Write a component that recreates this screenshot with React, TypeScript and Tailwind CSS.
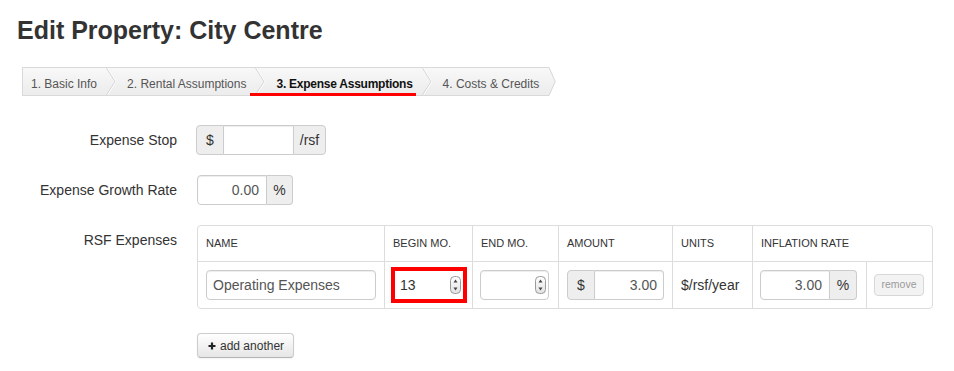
import React from "react";

function Spinner() {
  return (
    <svg width="11" height="18" viewBox="0 0 11 18" className="shrink-0">
      <defs>
        <linearGradient id="spg" x1="0" y1="0" x2="0" y2="1">
          <stop offset="0" stopColor="#ffffff" />
          <stop offset="1" stopColor="#e2e2e2" />
        </linearGradient>
      </defs>
      <rect x="0.5" y="0.5" width="10" height="17" rx="4" fill="url(#spg)" stroke="#9a9a9a" />
      <path d="M5.5 3.5 L7.5 6.5 L3.5 6.5 Z" fill="#444" />
      <path d="M3.5 11.5 L7.5 11.5 L5.5 14.5 Z" fill="#444" />
    </svg>
  );
}

function Chevron() {
  return (
    <svg width="10" height="27" viewBox="0 0 10 27" className="shrink-0">
      <polyline points="0.5,0 9,13.5 0.5,27" fill="none" stroke="#d2d2d2" strokeWidth="1" />
      <polyline points="1.5,0 10,13.5 1.5,27" fill="none" stroke="#fbfbfb" strokeWidth="1" />
    </svg>
  );
}

function Tip() {
  return (
    <svg width="8" height="29" viewBox="0 0 8 29" className="shrink-0">
      <defs>
        <linearGradient id="tipg" x1="0" y1="0" x2="0" y2="1">
          <stop offset="0" stopColor="#f8f8f8" />
          <stop offset="1" stopColor="#ececec" />
        </linearGradient>
      </defs>
      <polygon points="0,0 1,0 7.5,14.5 1,29 0,29" fill="url(#tipg)" />
      <polyline points="0,0.5 1,0.5 7.2,14.5 1,28.5 0,28.5" fill="none" stroke="#d6d6d6" />
    </svg>
  );
}

const steps = ["1. Basic Info", "2. Rental Assumptions", "3. Expense Assumptions", "4. Costs & Credits"];

function Breadcrumb() {
  return (
    <div className="ml-[22px] mt-[22px] flex h-[29px] w-fit">
      <div className="flex h-full items-stretch border-y border-l border-[#d9d9d9] bg-linear-to-b from-[#f8f8f8] to-[#ececec]">
        {steps.map((s, i) => (
          <React.Fragment key={s}>
            {i > 0 && <Chevron />}
            <div
              className={
                "relative whitespace-nowrap pt-[8px] text-[12px] leading-[16px] pr-[9px] " +
                (i === 0 ? "pl-[8px] " : "pl-[11px] ") +
                (i === 2 ? "font-bold tracking-[-0.25px] text-[#111]" : "text-[#555]")
              }
            >
              {s}
              {i === 2 && <span className="absolute bottom-[-1px] left-[-15px] right-[6px] h-[3px] bg-[#ff0000]" />}
            </div>
          </React.Fragment>
        ))}
      </div>
      <Tip />
    </div>
  );
}

const inputBase = "h-[30px] border border-[#cccccc] bg-white shadow-[inset_0_1px_1px_rgba(0,0,0,0.075)] flex items-center text-[14px] text-[#555]";
const addonBase = "h-[30px] border border-[#cccccc] bg-[#eeeeee] flex items-center justify-center text-[14px] text-[#333]";

function Label({ children, top }: { children: React.ReactNode; top?: boolean }) {
  return (
    <div className={"w-[177px] shrink-0 text-right text-[14px] leading-[20px] text-[#333] " + (top ? "pt-[5px]" : "")}>
      {children}
    </div>
  );
}

const cols = "grid grid-cols-[186px_88px_86px_114px_80px_114px_66px]";

function Table() {
  return (
    <div className="w-[736px] overflow-hidden rounded-[4px] border border-[#dddddd] text-[#333]">
      <div className={cols + " h-[36px] border-b border-[#dddddd] text-[11px]"}>
        <div className="flex items-center pl-[8px]">NAME</div>
        <div className="flex items-center border-l border-[#dddddd] pl-[8px]">BEGIN MO.</div>
        <div className="flex items-center border-l border-[#dddddd] pl-[8px]">END MO.</div>
        <div className="flex items-center border-l border-[#dddddd] pl-[8px]">AMOUNT</div>
        <div className="flex items-center border-l border-[#dddddd] pl-[8px]">UNITS</div>
        <div className="col-span-2 flex items-center border-l border-[#dddddd] pl-[8px]">INFLATION RATE</div>
      </div>
      <div className={cols + " h-[46px]"}>
        <div className="flex items-center pl-[8px]">
          <div className={inputBase + " w-[170px] rounded-[4px] pl-[6px]"}>Operating Expenses</div>
        </div>
        <div className="flex items-center border-l border-[#dddddd] pl-[6px]">
          <div className="flex h-[36px] w-[76px] items-center border-[4px] border-[#ff0000] bg-white pl-[5px] pr-[2px] text-[14px] text-[#333]">
            <span className="flex-1">13</span>
            <Spinner />
          </div>
        </div>
        <div className="flex items-center border-l border-[#dddddd] pl-[7px]">
          <div className={inputBase + " w-[69px] justify-end rounded-[4px] pr-[2px]"}>
            <Spinner />
          </div>
        </div>
        <div className="flex items-center border-l border-[#dddddd] pl-[8px]">
          <div className={addonBase + " w-[28px] rounded-l-[4px]"}>$</div>
          <div className={inputBase + " w-[69px] justify-end rounded-r-[4px] border-l-0 pr-[6px] text-[#333]"}>3.00</div>
        </div>
        <div className="flex items-center border-l border-[#dddddd] pl-[8px] text-[14px] text-[#333]">$/rsf/year</div>
        <div className="flex items-center border-l border-[#dddddd] pl-[7px]">
          <div className={inputBase + " w-[70px] justify-end rounded-l-[4px] pr-[7px] text-[#333]"}>3.00</div>
          <div className={addonBase + " w-[27px] rounded-r-[4px] border-l-0"}>%</div>
        </div>
        <div className="flex items-center border-l border-[#dddddd] pl-[7px]">
          <div className="flex h-[22px] w-[50px] items-center justify-center rounded-[4px] border border-[#d8d8d8] bg-[#f3f3f3] text-[10.5px] text-[#9a9a9a]">
            remove
          </div>
        </div>
      </div>
    </div>
  );
}

export default function App() {
  return (
    <div className="h-[371px] w-[954px] bg-white font-['Liberation_Sans',Arial,sans-serif] text-[#333]">
      <h1 className="ml-[17px] pt-[15px] text-[25px] font-bold leading-[30px] text-[#333]">Edit Property: City Centre</h1>
      <Breadcrumb />
      <div className="mt-[29px] flex flex-col gap-[20px]">
        <div className="flex items-center gap-[19px]">
          <Label>Expense Stop</Label>
          <div className="flex">
            <div className={addonBase + " w-[28px] rounded-l-[4px]"}>$</div>
            <div className={inputBase + " w-[69px] border-x-0"} />
            <div className={addonBase + " w-[33px] rounded-r-[4px]"}>/rsf</div>
          </div>
        </div>
        <div className="flex items-center gap-[20px]">
          <Label>Expense Growth Rate</Label>
          <div className="flex">
            <div className={inputBase + " w-[70px] justify-end rounded-l-[4px] pr-[7px] text-[#333]"}>0.00</div>
            <div className={addonBase + " w-[26px] rounded-r-[4px] border-l-0"}>%</div>
          </div>
        </div>
        <div className="flex items-start gap-[20px]">
          <Label top>RSF Expenses</Label>
          <div className="flex flex-col">
            <Table />
            <div className="mt-[24px] flex h-[25px] w-[97px] items-center gap-[4px] rounded-[4px] border border-[#cccccc] border-b-[#b3b3b3] bg-linear-to-b from-white to-[#e6e6e6] pl-[10px] text-[12px] text-[#333] shadow-[0_1px_2px_rgba(0,0,0,0.05)]">
              <svg width="8" height="8" viewBox="0 0 8 8">
                <path d="M4 0.5 V7.5 M0.5 4 H7.5" stroke="#222" strokeWidth="2.2" />
              </svg>
              <span>add another</span>
            </div>
          </div>
        </div>
      </div>
    </div>
  );
}
